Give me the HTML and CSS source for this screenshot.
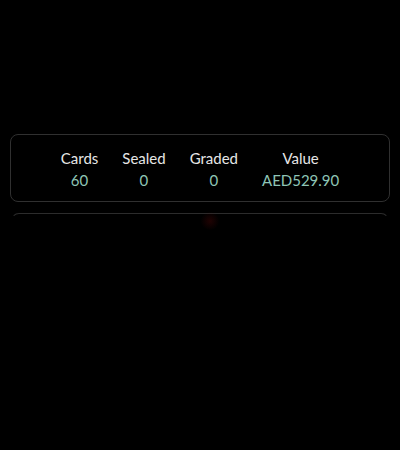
FILE: index.html
```
<!DOCTYPE html>
<html>
<head>
<meta charset="utf-8">
<link rel="stylesheet" href="styles.css">
</head>
<body>
<div class="page">
  <div class="card stats">
    <div class="stat"><div class="label">Cards</div><div class="value">60</div></div>
    <div class="stat"><div class="label">Sealed</div><div class="value">0</div></div>
    <div class="stat"><div class="label">Graded</div><div class="value">0</div></div>
    <div class="stat"><div class="label">Value</div><div class="value">AED529.90</div></div>
  </div>
  <div class="card next">
    <div class="glow"></div>
  </div>
</div>
</body>
</html>
```
FILE: styles.css
```
html, body {
  margin: 0;
  background: #000;
  height: 100%;
  overflow: hidden;
}
.page {
  padding: 134px 10px 0;
  display: flex;
  flex-direction: column;
  gap: 11px;
  font-family: Lato, "Noto Sans", sans-serif;
}
.card {
  border: 1px solid #303030;
  border-radius: 8px;
  background: #000;
}
.stats {
  display: flex;
  justify-content: center;
  gap: 24px;
  padding: 12px 0 10px;
}
.stat {
  display: flex;
  flex-direction: column;
  align-items: center;
}
.label {
  color: #e6e6e6;
  font-size: 15px;
  line-height: 22px;
}
.value {
  color: #8ec5b6;
  font-size: 15px;
  line-height: 22px;
}
.next {
  height: 200px;
  margin: 0 1px;
  border-color: #2c2c2c transparent transparent;
  border-bottom: none;
  position: relative;
}
.glow {
  position: absolute;
  left: 188px;
  top: -2px;
  width: 20px;
  height: 18px;
  border-radius: 50%;
  background: radial-gradient(circle, rgba(90, 8, 8, 0.35), rgba(0,0,0,0) 70%);
}
```
